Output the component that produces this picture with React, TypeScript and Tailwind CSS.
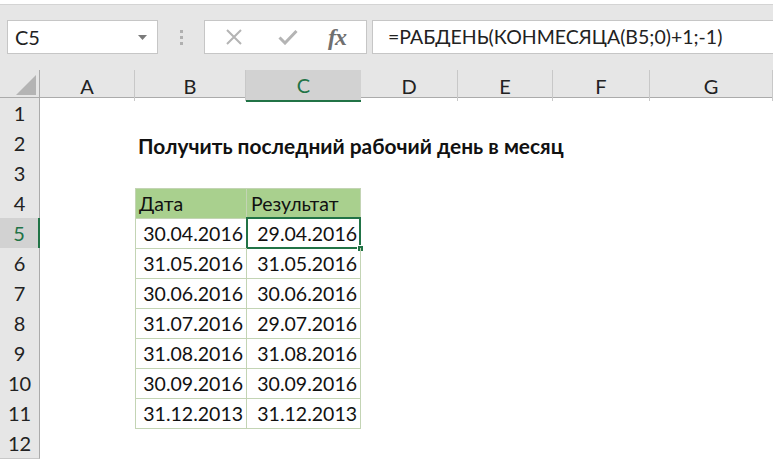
import React from 'react';

const COLS = ['A', 'B', 'C', 'D', 'E', 'F', 'G'];

const ROWS: Record<number, [string, string]> = {
  5: ['30.04.2016', '29.04.2016'],
  6: ['31.05.2016', '31.05.2016'],
  7: ['30.06.2016', '30.06.2016'],
  8: ['31.07.2016', '29.07.2016'],
  9: ['31.08.2016', '31.08.2016'],
  10: ['30.09.2016', '30.09.2016'],
  11: ['31.12.2013', '31.12.2013'],
};

function Toolbar() {
  return (
    <div className="h-[65px] bg-[#e6e6e6] flex items-start pt-[15px] pl-[7px]">
      {/* Name box */}
      <div className="w-[151px] h-[34px] bg-white border border-[#c6c6c6] flex items-center justify-between pl-[7px] pr-[10px]">
        <span className="text-[20px] text-[#222]">C5</span>
        <svg width="9" height="5" viewBox="0 0 9 5">
          <path d="M0 0h9L4.5 5z" fill="#7a7a7a" />
        </svg>
      </div>
      {/* grip */}
      <div className="w-[46px] h-[34px] flex flex-col items-center justify-center gap-[3px]">
        <span className="w-[3px] h-[3px] bg-[#b0b0b0]" />
        <span className="w-[3px] h-[3px] bg-[#b0b0b0]" />
        <span className="w-[3px] h-[3px] bg-[#b0b0b0]" />
      </div>
      {/* formula buttons */}
      <div className="w-[163px] h-[34px] bg-white border border-[#c6c6c6] flex items-center">
        <div className="w-[57px] flex justify-center pl-[1px]">
          <svg width="18" height="18" viewBox="0 0 18 18">
            <path d="M2 2l14 14M16 2L2 16" stroke="#b4b4b4" strokeWidth="2" />
          </svg>
        </div>
        <div className="w-[52px] flex justify-center">
          <svg width="20" height="16" viewBox="0 0 20 16">
            <path d="M1.5 8.5l5.5 5.5L18.5 2" stroke="#b4b4b4" strokeWidth="3" fill="none" />
          </svg>
        </div>
        <div className="flex-1 flex justify-center pr-[6px]">
          <span className="font-['Liberation_Serif',serif] italic font-bold text-[24px] text-[#707070] leading-none tracking-[-1px]">fx</span>
        </div>
      </div>
      {/* formula input */}
      <div className="ml-[5px] flex-1 h-[34px] bg-white border border-[#c6c6c6] border-r-0 flex items-center pl-[15px]">
        <span className="text-[19.5px] text-[#222]">=РАБДЕНЬ(КОНМЕСЯЦА(B5;0)+1;-1)</span>
      </div>
    </div>
  );
}

const GRID = 'grid grid-cols-[40px_95px_111px_115px_97px_95px_97px_123px]';

function HeaderRow() {
  return (
    <div className={`${GRID} h-[28px] bg-[#e6e6e6] border-b border-[#ababab]`}>
      <div className="relative border-r border-[#ababab]">
        <svg className="absolute left-[16px] top-[5px]" width="20" height="20" viewBox="0 0 20 20">
          <path d="M20 0V20H0z" fill="#b4b4b4" />
        </svg>
      </div>
      {COLS.map((c) => (
        <div
          key={c}
          className={
            c === 'C'
              ? 'flex items-center justify-center bg-[#d2d2d2] text-[#217346] border-b-2 border-[#217346] text-[20px] -mb-px'
              : 'flex items-center justify-center text-[#222] text-[20px] border-r border-[#c8c8c8]'
          }
        >
          {c}
        </div>
      ))}
    </div>
  );
}

function Row({ n }: { n: number }) {
  const sel = n === 5;
  const inTable = n >= 4 && n <= 11;
  const data = ROWS[n];
  const tbl = 'border-l border-b border-[#c3d4b4]';
  return (
    <div className={`${GRID} h-[30px]`}>
      <div
        className={
          sel
            ? 'flex items-center justify-center bg-[#d2d2d2] text-[#217346] text-[20px] border-r-2 border-[#217346] border-b border-b-[#c8c8c8]'
            : 'flex items-center justify-center bg-[#e6e6e6] text-[#222] text-[20px] border-r border-[#ababab] border-b border-b-[#c8c8c8]'
        }
      >
        {n}
      </div>
      <div />
      {n === 2 ? (
        <div className="relative">
          <span className="absolute left-[3px] top-[2px] whitespace-nowrap font-bold text-[20.9px] text-[#111]">
            Получить последний рабочий день в месяц
          </span>
        </div>
      ) : n === 4 ? (
        <div className={`${tbl} border-t bg-[#a9d08e] flex items-end pl-[3px] text-[19.5px] leading-[28px] text-[#111]`}>Дата</div>
      ) : inTable ? (
        <div className={`${tbl} flex items-end justify-end pr-[3px] text-[19.5px] leading-[29px] text-[#111]`}>{data[0]}</div>
      ) : (
        <div />
      )}
      {n === 4 ? (
        <div className={`${tbl} border-t border-r bg-[#a9d08e] flex items-end pl-[4px] text-[19.5px] leading-[28px] text-[#111]`}>Результат</div>
      ) : inTable ? (
        <div className={`${tbl} border-r relative flex items-end justify-end pr-[3px] text-[19.5px] leading-[29px] text-[#111]`}>
          {data[1]}
          {sel && (
            <>
              <div className="absolute -left-px -top-px -right-px -bottom-px border-2 border-[#217346]" />
              <div className="absolute -right-[4px] -bottom-[4px] w-[7px] h-[7px] bg-[#217346] border border-white" />
            </>
          )}
        </div>
      ) : (
        <div />
      )}
      <div />
      <div />
      <div />
      <div />
    </div>
  );
}

export default function App() {
  return (
    <div className="w-[773px] h-[460px] overflow-hidden bg-white font-['Lato','Open_Sans',sans-serif]">
      <div className="h-[5px] bg-white border-b border-[#d4d4d4]" />
      <Toolbar />
      <HeaderRow />
      {Array.from({ length: 12 }, (_, i) => (
        <Row key={i} n={i + 1} />
      ))}
    </div>
  );
}
